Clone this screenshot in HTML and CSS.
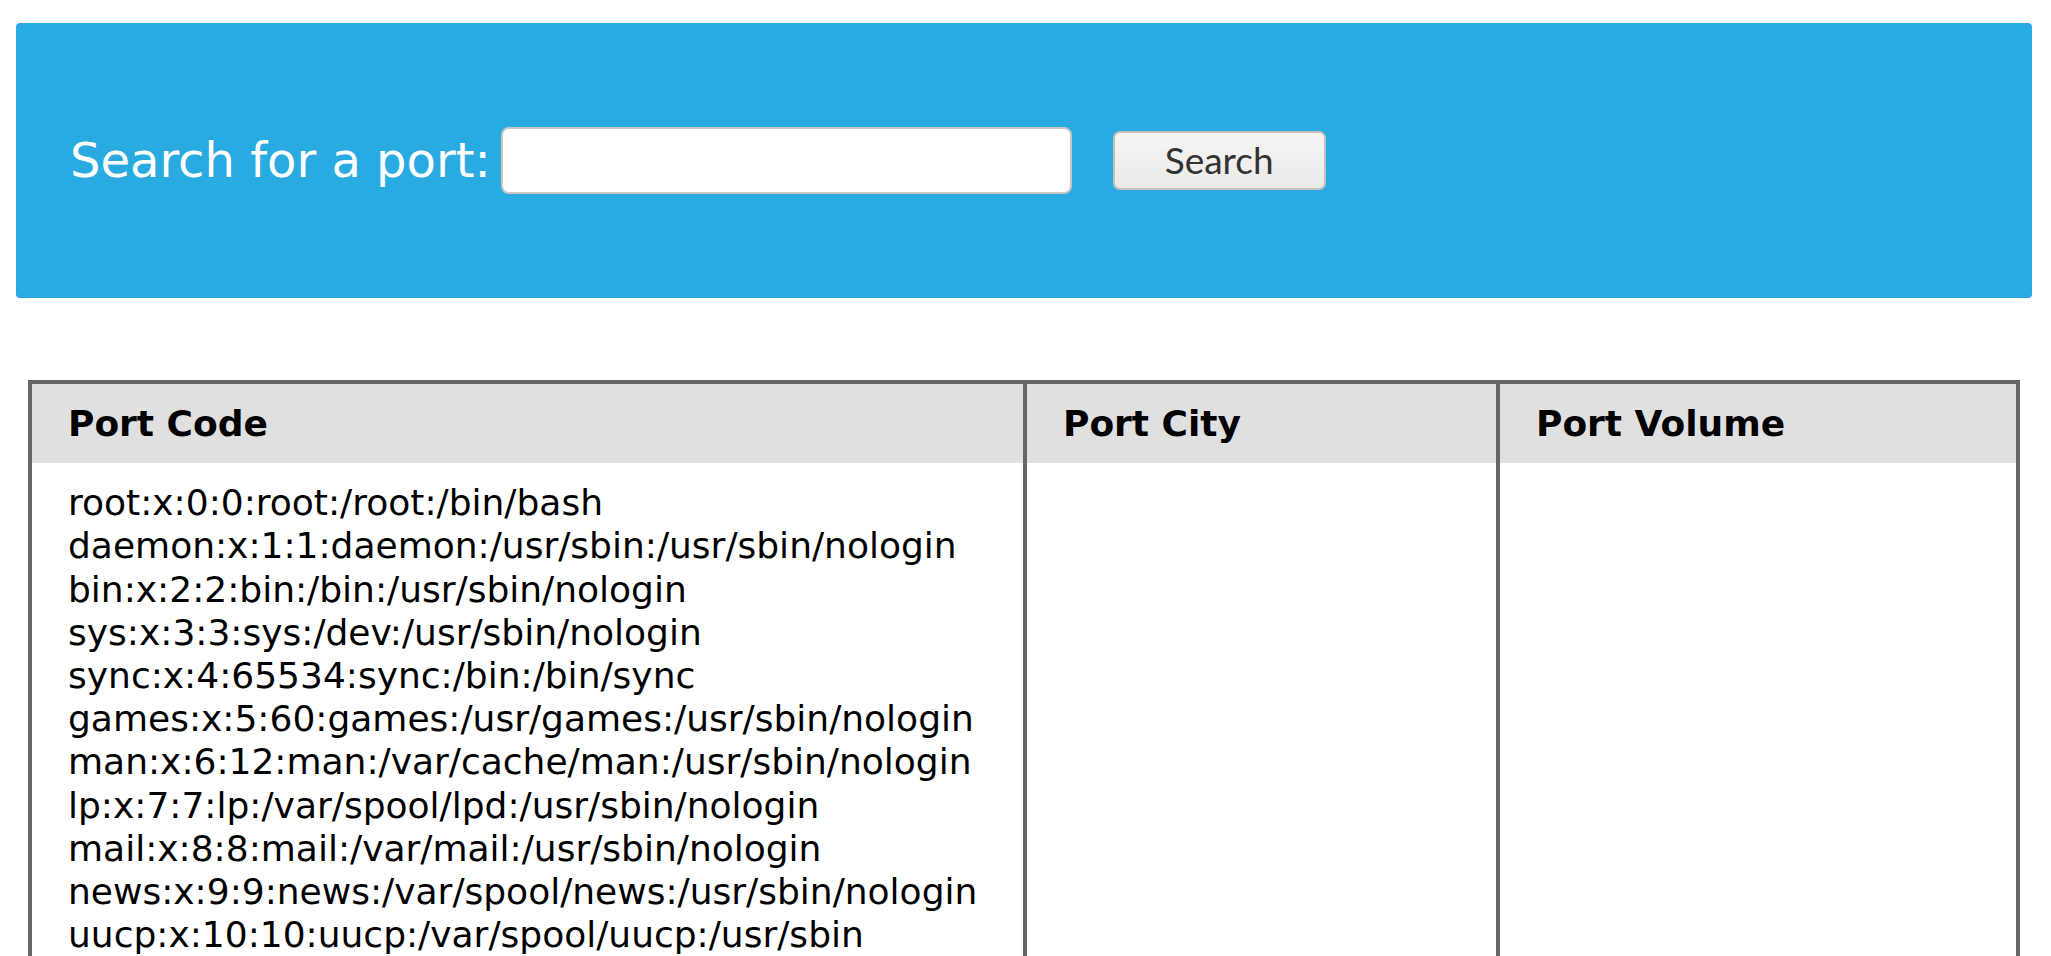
FILE: index.html
```html
<!DOCTYPE html>
<html lang="en">
<head>
<meta charset="utf-8">
<title>Port search</title>
<link rel="stylesheet" href="styles.css">
</head>
<body>
<form class="search-panel">
  <label class="search-label" for="port">Search for a port:</label>
  <input class="search-input" id="port" type="text">
  <button class="search-button" type="button">Search</button>
</form>
<table class="ports">
  <thead>
    <tr>
      <th class="col-code">Port Code</th>
      <th class="col-city">Port City</th>
      <th class="col-volume">Port Volume</th>
    </tr>
  </thead>
  <tbody>
    <tr>
      <td>root:x:0:0:root:/root:/bin/bash<br>daemon:x:1:1:daemon:/usr/sbin:/usr/sbin/nologin<br>bin:x:2:2:bin:/bin:/usr/sbin/nologin<br>sys:x:3:3:sys:/dev:/usr/sbin/nologin<br>sync:x:4:65534:sync:/bin:/bin/sync<br>games:x:5:60:games:/usr/games:/usr/sbin/nologin<br>man:x:6:12:man:/var/cache/man:/usr/sbin/nologin<br>lp:x:7:7:lp:/var/spool/lpd:/usr/sbin/nologin<br>mail:x:8:8:mail:/var/mail:/usr/sbin/nologin<br>news:x:9:9:news:/var/spool/news:/usr/sbin/nologin<br>uucp:x:10:10:uucp:/var/spool/uucp:/usr/sbin</td>
      <td></td>
      <td></td>
    </tr>
  </tbody>
</table>
</body>
</html>
```

FILE: styles.css
```css
html, body {
  margin: 0;
  padding: 0;
  overflow: hidden;
  background: #ffffff;
}

body {
  font-family: "DejaVu Sans", "Liberation Sans", sans-serif;
  color: #000000;
}

.search-panel {
  display: flex;
  align-items: center;
  box-sizing: border-box;
  height: 275px;
  margin: 23px 19px 0 16px;
  padding-left: 54px;
  background: #29abe2;
  border-radius: 4px;
}

.search-label {
  font-size: 48px;
  line-height: 1.164;
  color: #ffffff;
  margin-right: 10px;
}

.search-input {
  box-sizing: border-box;
  width: 571px;
  height: 67px;
  margin: 0;
  border: 2px solid #cbc7c2;
  border-radius: 8px;
  background: #ffffff;
  outline: none;
}

.search-button {
  box-sizing: border-box;
  width: 213px;
  height: 59px;
  margin: 0 0 0 41px;
  padding: 0 0 2px;
  border: 2px solid #c4c0bb;
  border-radius: 7px;
  background: linear-gradient(to bottom, #f6f5f4 0%, #ebeae8 100%);
  font-family: "Lato", "Open Sans", sans-serif;
  font-size: 37px;
  color: #333333;
}

.ports {
  box-sizing: border-box;
  width: 1992px;
  margin: 82px 0 0 28px;
  border: 4px solid #666666;
  border-collapse: separate;
  border-spacing: 0;
  table-layout: fixed;
}

.ports th,
.ports td {
  box-sizing: border-box;
  padding: 18px 36px;
  font-size: 36px;
  line-height: 1.2;
  text-align: left;
  vertical-align: top;
}

.ports th + th,
.ports td + td {
  border-left: 4px solid #666666;
}

.ports th {
  background: #e0e0e0;
  font-weight: bold;
}

.col-code { width: 991px; }
.col-city { width: 473px; }
.col-volume { width: 520px; }

.ports td {
  white-space: nowrap;
  height: 600px;
}
```
